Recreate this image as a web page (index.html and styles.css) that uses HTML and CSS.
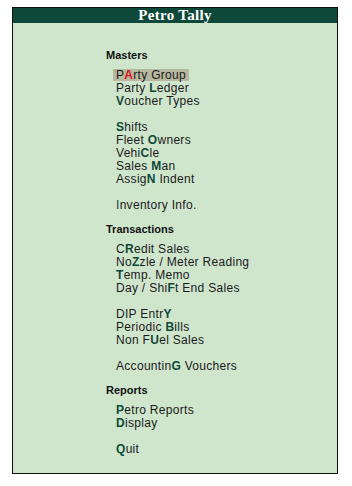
FILE: index.html
```html
<!DOCTYPE html>
<html lang="en">

<head>
    <meta charset="UTF-8">
    <meta name="viewport" content="width=device-width, initial-scale=1.0">
    <title>Petro Tally</title>
    <link rel="stylesheet" href="styles.css">
</head>

<body>
    <div class="window">
        <div class="titleBar">Petro Tally</div>
        <div class="menu">
            <div class="section">
                <h4>Masters</h4>
                <ul>
                    <li><span class="current">P<b class="key">A</b>rty Group</span></li>
                    <li>Party <b class="key">L</b>edger</li>
                    <li><b class="key">V</b>oucher Types</li>
                </ul>
                <ul>
                    <li><b class="key">S</b>hifts</li>
                    <li>Fleet <b class="key">O</b>wners</li>
                    <li>Vehi<b class="key">C</b>le</li>
                    <li>Sales <b class="key">M</b>an</li>
                    <li>Assig<b class="key">N</b> Indent</li>
                </ul>
                <ul>
                    <li><span class="keyLight">I</span>nventory Info.</li>
                </ul>
            </div>
            <div class="section">
                <h4>Transactions</h4>
                <ul>
                    <li>C<b class="key">R</b>edit Sales</li>
                    <li>No<b class="key">Z</b>zle / Meter Reading</li>
                    <li><b class="key">T</b>emp. Memo</li>
                    <li>Day / Shi<b class="key">F</b>t End Sales</li>
                </ul>
                <ul>
                    <li>DIP Entr<b class="key">Y</b></li>
                    <li>Periodic <b class="key">B</b>ills</li>
                    <li>Non F<b class="key">U</b>el Sales</li>
                </ul>
                <ul>
                    <li>Accountin<b class="key">G</b> Vouchers</li>
                </ul>
            </div>
            <div class="section">
                <h4>Reports</h4>
                <ul>
                    <li><b class="key">P</b>etro Reports</li>
                    <li><b class="key">D</b>isplay</li>
                </ul>
                <ul>
                    <li><b class="key">Q</b>uit</li>
                </ul>
            </div>
        </div>
    </div>
</body>

</html>
```

FILE: styles.css
```css
*,
*::after,
*::before {
    box-sizing: border-box;
}

body {
    margin: 0;
    background-color: #ffffff;
    font-family: 'Liberation Sans', Arial, sans-serif;
}

.window {
    margin: 7px 0 0 12px;
    width: 326px;
    height: 467px;
    border: 1px solid #111111;
    background-color: #cfe6cd;
}

.titleBar {
    height: 15px;
    background-color: #0e4838;
    color: #ffffff;
    font-family: 'Liberation Serif', 'Times New Roman', serif;
    font-weight: bold;
    font-size: 15px;
    line-height: 15px;
    letter-spacing: 0.3px;
    text-align: center;
}

.menu {
    padding: 26px 0 0 93px;
}

.section {
    margin-bottom: 11px;
}

.section>h4 {
    margin: 0 0 7px 0;
    font-size: 11px;
    line-height: 13px;
    color: #111111;
}

.section>ul {
    list-style: none;
    margin: 0 0 13px 10px;
    padding: 0;
}

.section>ul:last-child {
    margin-bottom: 0;
}

li {
    font-size: 12px;
    line-height: 13px;
    height: 13px;
    letter-spacing: 0.3px;
    color: #1a1a1a;
    white-space: nowrap;
}

.key {
    color: #0e4838;
}

.keyLight {
    color: #0e4838;
}

.current {
    display: inline-block;
    margin-left: -3px;
    padding: 0 3px;
    height: 12px;
    line-height: 12px;
    background-color: #b7b8a0;
}

.current>.key {
    color: #e0101a;
}
```
